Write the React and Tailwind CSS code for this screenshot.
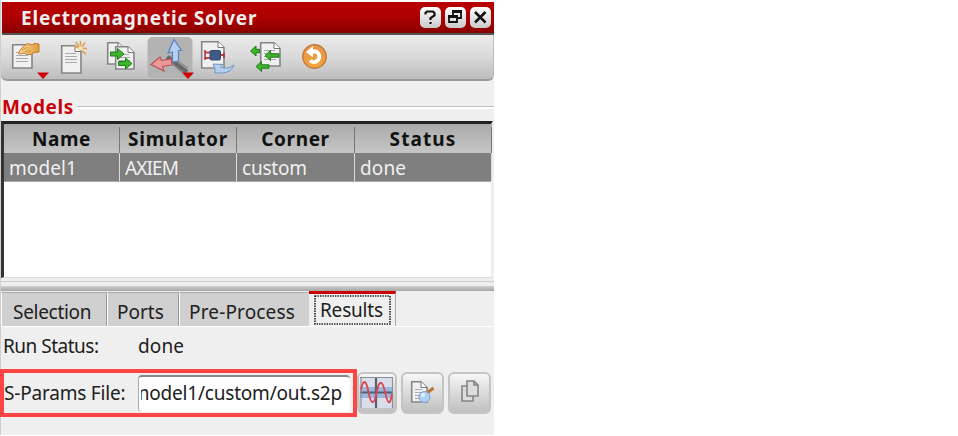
import React from "react";

const Page = ({ x = 0, y = 0, w = 20, h = 24, lines = true }) => (
  <g transform={`translate(${x} ${y})`}>
    <path d={`M0.7 0.7H${w - 6}L${w} 6.5V${h}H0.7Z`} fill="#f0f0f0" stroke="#858585" strokeWidth="1.6" />
    <path d={`M${w - 6} 0.7V6.5H${w}`} fill="#fff" stroke="#777" />
    {lines && <path d={`M4 8.5H${w - 5}M4 11.5H${w - 4}M4 14.5H${w - 4}M4 17.5H${w - 4}`} stroke="#aaa" strokeWidth="1.2" />}
  </g>
);

const Arrow = ({ x, y, left }) => (
  <path
    transform={`translate(${x} ${y})${left ? " scale(-1 1)" : ""}`}
    d="M0 -2H7V-5.5L13.5 0L7 5.5V2H0Z"
    fill="#3fb52b"
    stroke="#20791a"
    strokeWidth="1"
  />
);

const SmallArrow = ({ x, y, w }) => (
  <path
    transform={`translate(${x} ${y})`}
    d={`M0 0L5.500 -5V-1.700H${w}V1.700H5.500V5Z`}
    fill="#3fb52b"
    stroke="#20791a"
    strokeWidth="1"
  />
);

function Toolbar() {
  return (
    <div className="h-[46px] rounded-b-md border-b-2 border-r border-b-[#999] border-r-[#bbb] bg-linear-to-b from-[#ebebeb] via-[#dadada] to-[#bdbdbd]">
      <svg width="340" height="46" viewBox="1 35 340 46" className="block">
        <defs>
          <linearGradient id="orange" x2="0" y2="1">
            <stop stopColor="#e3964c" />
            <stop offset="1" stopColor="#f5a53c" />
          </linearGradient>
          <linearGradient id="cuff" x2="1" y2="0">
            <stop stopColor="#fbd998" />
            <stop offset="1" stopColor="#dd9b3c" />
          </linearGradient>
        </defs>
        <Page x={12} y={44} w={20} h={24} />
        <path d="M18.500 53.500L20 50L25 45L28 43.500L32 45L34 43.500L39 44V52L34 52.500L31 54.500H27L24 53L20 54Z" fill="url(#cuff)" stroke="#c67b2d" />
        <path d="M22 50L27 47.500M25 52L29 50M28 53L31 51" stroke="#c98837" strokeWidth="0.900" />
        <path d="M37 72.500H49L43 79Z" fill="#cf0008" />
        <Page x={61} y={45} w={20} h={28} />
        <path d="M76 42L79 47M80.500 41V46M85 42.500L82 47M83 48.500H87M82 51L86 54M74 45L78 48" stroke="#dca15b" strokeWidth="1.600" />
        <circle cx="80" cy="48.500" r="2" fill="#ffe0a0" />

        <Page x={107} y={42} w={17} h={22} lines={false} />
        <Page x={115} y={46} w={19} h={23} />
        <Arrow x={110.500} y={54} />
        <Arrow x={118.500} y={63.500} />

        <rect x="147.500" y="37" width="45" height="41" rx="5" fill="#b3b3b3" />
        <path d="M167 57L187 72" stroke="#686868" strokeWidth="4.500" />
        <path d="M168 60L183 73M170 56L188 68" stroke="#858585" strokeWidth="1.200" />
        <path d="M174 39.500L181.500 50.500H178.500V61L172.500 62V52L168 53Z" fill="#b5cff1" stroke="#5b82bd" strokeWidth="1.200" />
        <path d="M151 64.500L160 57L161.500 60.500L171 59L172 65L162.500 66.500L164 71Z" fill="#e89998" stroke="#bd5556" strokeWidth="1.200" />
        <path d="M182 72.500H194L188 79Z" fill="#cf0008" />

        <Page x={201} y={41} w={23} h={27} lines={false} />
        <path d="M205 52.500H211M205 58H211M219 55H224" stroke="#ca3f45" strokeWidth="2" />
        <path d="M205 50V60M224 52.500V58" stroke="#a52e35" strokeWidth="1.500" />
        <rect x="210" y="50.500" width="10.500" height="9.500" rx="1.500" fill="#405c86" stroke="#2f466c" />
        <path d="M213 64L223 64.500L220.500 67Q228 70 234 65Q231 73 222 73H215V69Z" fill="#b5cff0" stroke="#7396c4" />

        <Page x={260} y={42} w={20} h={24} />
        <SmallArrow x={250.500} y={51} w={9} />
        <SmallArrow x={265} y={55.500} w={14} />
        <SmallArrow x={256} y={66.500} w={13} />

        <circle cx="314.500" cy="56.500" r="11.700" fill="url(#orange)" stroke="#c27b39" strokeWidth="1.500" />
        <path d="M312 51.500H316A5.500 5.500 0 1 1 310 60.500" fill="none" stroke="#fff" strokeWidth="3.800" />
        <path d="M306 52L313 46V57.500Z" fill="#fff" />
      </svg>
    </div>
  );
}

const WindowButton = ({ children }) => (
  <div className="h-[21px] w-[21px] rounded-[5px] bg-linear-to-b from-white to-[#cacaca]">
    <svg width="21" height="21" viewBox="0 0 21 21" fill="none" stroke="#111" strokeWidth="2.200">
      {children}
    </svg>
  </div>
);

const ActionButton = ({ children, width = "w-[43px]" }) => (
  <div className={`h-[42px] ${width} overflow-hidden rounded-md border-2 border-[#c4c4c4] bg-linear-to-b from-[#f6f6f6] to-[#c0c0c0]`}>
    {children}
  </div>
);

const columns = [
  { name: "Name", value: "model1", width: "w-[116px]", head: "tracking-[0.6px]", cell: "tracking-[0.1px]" },
  { name: "Simulator", value: "AXIEM", width: "w-[117px]", head: "tracking-[0.8px]", cell: "tracking-[-0.9px]" },
  { name: "Corner", value: "custom", width: "w-[118px]", head: "tracking-[0.6px]", cell: "tracking-[-0.2px]" },
  { name: "Status", value: "done", width: "w-[137px]", head: "tracking-[1.1px]", cell: "tracking-[0.1px]" },
];

export default function App() {
  return (
    <div className="h-[436px] w-[958px] overflow-hidden bg-white font-['Noto_Sans',sans-serif] text-[19px] text-[#202020]">
      <div className="h-[435px] w-[494px] border-l border-[#cfcfcf] bg-[#efefef]">
        <div className="h-[2px] bg-white" />
        <header className="ml-px flex h-[33px] items-center border-b-2 border-[#555] bg-linear-to-b from-[#b80000] via-[#ae0000] to-[#880000] pl-[19px]">
          <h1 className="whitespace-nowrap text-[19px] font-bold leading-[30px] tracking-[0.8px] text-[#eee]">Electromagnetic Solver</h1>
          <div className="ml-auto mr-[3px] flex gap-[4px]">
            <WindowButton>
              <path d="M5.500 7.500V6L7 4.500H13L14.500 6V8.500L10.500 11V13M10.500 15V17" />
            </WindowButton>
            <WindowButton>
              <path d="M8 8V4H16V11H12M4 9H12V15H4Z" strokeWidth="1.800" />
              <path d="M7.100 4.500H16.900M3.100 9.500H12.900" strokeWidth="3" />
            </WindowButton>
            <WindowButton>
              <path d="M5 5L15.500 15.500M15.500 5L5 15.500" strokeWidth="2.500" />
            </WindowButton>
          </div>
        </header>
        <Toolbar />

        <section>
          <div className="flex h-[40px] items-center pl-px pt-[12px]">
            <h2 className="w-[75px] text-[19px] font-bold leading-6 tracking-[0.6px] text-[#c80008]">Models</h2>
            <div className="h-[3px] flex-1 border-b-2 border-t border-b-white border-t-[#bfc0c5]" />
          </div>
          <div className="flex h-[157px] w-[492px] flex-col border-b border-l-[3px] border-r-2 border-t-[3px] border-b-[#ddd] border-l-[#333] border-r-[#eee] border-t-[#222] bg-white">
            <div className="flex border-b border-[#aaa]">
              {columns.map((c) => (
                <div key={c.name} className={`${c.width} shrink-0`}>
                  <div className="h-[29px] bg-linear-to-b from-[#aaa] to-[#c6c6c6] pt-[3px]">
                    <div className={`h-[26px] border-r border-[#777] text-center text-[19px] font-bold leading-[24px] text-[#111] ${c.head}`}>{c.name}</div>
                  </div>
                  <div className={`h-[28px] border-r border-[#ddd] bg-[#7f7f7f] pl-[5px] leading-[30px] text-[#f0f0f0] ${c.cell}`}>{c.value}</div>
                </div>
              ))}
            </div>
          </div>
        </section>

        <div className="mt-[3px] h-[11px] border-t border-[#ccc] pt-[4px]">
          <div className="h-[5px] bg-linear-to-b from-[#d0d0d0] to-[#a5a5a5]" />
        </div>

        <nav className="flex h-[35px] items-end border-b border-white leading-[38px]">
          <div className="h-[34px] w-[106px] border-l border-r border-t border-l-white border-r-[#999] border-t-[#aaa] bg-[#d0d0d0] pl-[11px] tracking-[-0.3px]">Selection</div>
          <div className="h-[34px] w-[72px] border-l border-r border-t border-l-white border-r-[#999] border-t-[#aaa] bg-[#d0d0d0] pl-[9px]">Ports</div>
          <div className="h-[34px] w-[130px] border-l border-t border-l-white border-t-[#aaa] bg-[#d0d0d0] pl-[9px] tracking-[0.15px]">Pre-Process</div>
          <div className="h-[35px] w-[87px] border-r border-t-[3px] border-r-[#aaa] border-t-[#c90000] pl-[5px] pt-px">
            <div className="relative h-[30px] w-[77px] pl-[6px] leading-[31px] tracking-[-0.2px]">
              <svg className="absolute left-0 top-0" width="77" height="30" fill="none">
                <rect x="1" y="1" width="75" height="28" stroke="#222" strokeWidth="1.600" strokeDasharray="1.400 1.100" />
              </svg>
              Results
            </div>
          </div>
        </nav>

        <div className="flex h-[42px] items-start pl-[2px] leading-[38px]">
          <span className="w-[135px] tracking-[-0.5px]">Run Status:</span>
          <span className="tracking-[0.1px]">done</span>
        </div>

        <div className="-ml-px flex items-center">
          <div className="flex h-[48px] w-[357px] shrink-0 items-center border-4 border-[#ff4444]">
            <span className="w-[134px] shrink-0 whitespace-nowrap tracking-[-0.2px]">S-Params File:</span>
            <div className="flex h-[37px] w-[212px] justify-end overflow-hidden rounded-[4px] border-l border-t-2 border-l-[#aaa] border-t-[#888] bg-white pr-[8px]">
              <div className="flex w-[201px] justify-end overflow-hidden whitespace-nowrap leading-[33px] tracking-[-0.2px]">
                <span>model1/custom/out.s2p</span>
              </div>
            </div>
          </div>
          <div className="flex gap-[4px]">
            <ActionButton width="w-[40px]">
              <svg width="36" height="38" viewBox="359 374 36 38">
                <rect x="360" y="377" width="33" height="31" fill="#d9deea" />
                <path d="M360 392.500H393" stroke="#9db6dc" strokeWidth="11" />
                <path d="M360 392.500H393M376 377V408" stroke="#56606f" strokeWidth="2.200" />
                <path d="M361 377V408M392.500 377V408M360 377.500H393" stroke="#8b8f98" strokeWidth="1.200" />
                <path d="M361 390C363 379 366 379 368.500 392S374 406 376.500 393S382 379 385 392S390 406 392 394" fill="none" stroke="#dc4450" strokeWidth="1.800" />
              </svg>
            </ActionButton>
            <ActionButton>
              <svg width="39" height="38" viewBox="403 374 39 38">
                <Page x={411} y={381} w={16} h={21} />
                <path d="M427 393L433.500 388" stroke="#bd7438" strokeWidth="3" />
                <circle cx="424.500" cy="397" r="5.500" fill="#add1f4" stroke="#7da2cc" />
                <circle cx="423" cy="395" r="2" fill="#e4f4ff" />
              </svg>
            </ActionButton>
            <ActionButton>
              <svg width="39" height="38" viewBox="450 374 39 38" fill="#ddd" stroke="#858585" strokeWidth="1.600">
                <path d="M462 386H473V401H462Z" />
                <path d="M467 381H474L478 385V396H467ZM474 381V385H478" />
              </svg>
            </ActionButton>
          </div>
        </div>
      </div>
    </div>
  );
}
